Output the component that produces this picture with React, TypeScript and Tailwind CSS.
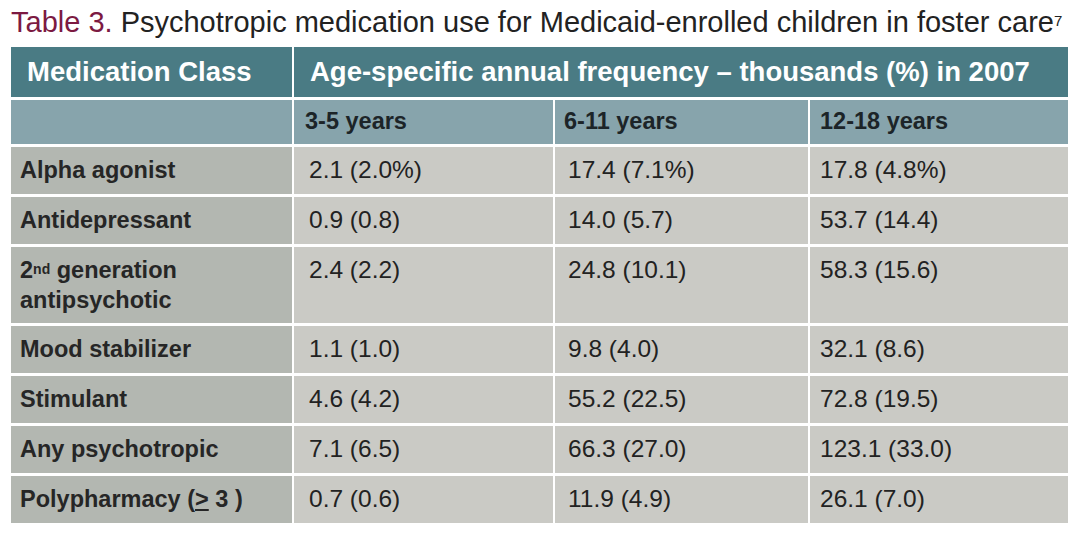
import React from "react";

const rows: { name: React.ReactNode; values: string[]; tall?: boolean }[] = [
  { name: "Alpha agonist", values: ["2.1 (2.0%)", "17.4 (7.1%)", "17.8 (4.8%)"] },
  { name: "Antidepressant", values: ["0.9 (0.8)", "14.0 (5.7)", "53.7 (14.4)"] },
  {
    name: (
      <>
        2<sup className="text-[14px] relative -top-[4px]">nd</sup> generation
        <br />
        antipsychotic
      </>
    ),
    values: ["2.4 (2.2)", "24.8 (10.1)", "58.3 (15.6)"],
    tall: true,
  },
  { name: "Mood stabilizer", values: ["1.1 (1.0)", "9.8 (4.0)", "32.1 (8.6)"] },
  { name: "Stimulant", values: ["4.6 (4.2)", "55.2 (22.5)", "72.8 (19.5)"] },
  { name: "Any psychotropic", values: ["7.1 (6.5)", "66.3 (27.0)", "123.1 (33.0)"] },
  {
    name: (
      <>
        Polypharmacy (<span className="underline underline-offset-2">&gt;</span> 3 )
      </>
    ),
    values: ["0.7 (0.6)", "11.9 (4.9)", "26.1 (7.0)"],
  },
];

// padding de cada coluna de valores
const valuePad = ["pl-[15px]", "pl-[13px]", "pl-[10px]"];

export default function App() {
  return (
    <div className="w-[1075px] h-[534px] bg-white font-['Liberation_Sans',Arial,sans-serif] text-[#222]">
      {/* Título */}
      <div className="pl-[11px] pt-[5px] h-[38px] text-[29px] leading-[34px] whitespace-nowrap">
        <span className="text-[#7c1a42]">Table 3.</span> Psychotropic medication use for
        Medicaid-enrolled children in foster care
        <sup className="text-[15px] relative -top-[6px]">7</sup>
      </div>

      {/* Tabela */}
      <div className="mt-[9px] ml-[11px] grid grid-cols-[281px_259px_253px_258px] gap-x-[2px] gap-y-[3px]">
        <div className="bg-[#4a7b84] h-[50px] flex items-center pl-[16px] text-white font-bold text-[27.5px]">
          Medication Class
        </div>
        <div className="col-span-3 bg-[#4a7b84] h-[50px] flex items-center pl-[16px] text-white font-bold text-[27.5px] whitespace-nowrap">
          Age-specific annual frequency – thousands (%) in 2007
        </div>

        <div className="bg-[#87a4ac] h-[44px]" />
        {["3-5 years", "6-11 years", "12-18 years"].map((t, i) => (
          <div
            key={t}
            className={`bg-[#87a4ac] h-[44px] flex items-center font-bold text-[23.5px] text-[#1c2428] ${
              ["pl-[11px]", "pl-[9px]", "pl-[10px]"][i]
            }`}
          >
            {t}
          </div>
        ))}

        {rows.map((r, idx) => (
          <React.Fragment key={idx}>
            <div
              className={`bg-[#b3b7b1] pl-[9px] pt-[8px] font-bold text-[23.5px] leading-[30px] text-[#262626] ${
                r.tall ? "h-[76px]" : "h-[47px]"
              }`}
            >
              {r.name}
            </div>
            {r.values.map((v, i) => (
              <div
                key={i}
                className={`bg-[#cacac5] pt-[8px] text-[24.5px] leading-[30px] ${valuePad[i]} ${
                  r.tall ? "h-[76px]" : "h-[47px]"
                }`}
              >
                {v}
              </div>
            ))}
          </React.Fragment>
        ))}
      </div>
    </div>
  );
}
